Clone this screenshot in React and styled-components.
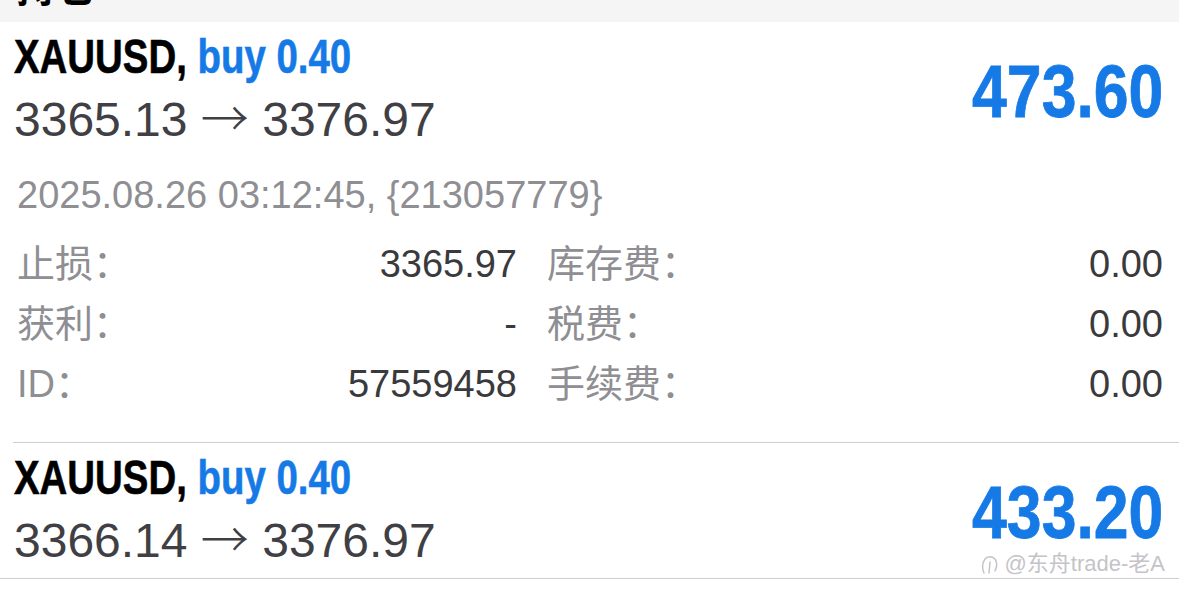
import React from "react";
import styled, { createGlobalStyle } from "styled-components";

const GlobalStyle = createGlobalStyle`
  html, body {
    margin: 0;
    padding: 0;
    background: #fff;
  }
  body {
    font-family: "Liberation Sans", "Noto Sans CJK SC", sans-serif;
    -webkit-font-smoothing: antialiased;
  }
`;

const BLUE = "#157ae6";

const Page = styled.div`
  position: relative;
  width: 1179px;
  background: #fff;
  overflow: hidden;
`;

const SectionHeader = styled.div`
  height: 22px;
  background: #f5f5f5;
  overflow: hidden;
  padding-left: 16px;
`;

const SectionTitle = styled.div`
  margin-top: -35px;
  font-size: 40px;
  line-height: 40px;
  font-weight: 700;
  color: #000;
  font-family: "Noto Sans CJK SC", sans-serif;
`;

const Item = styled.div`
  padding: 7px 16px ${p => p.$bottom}px 14px;
`;

const Top = styled.div`
  display: flex;
  justify-content: space-between;
  align-items: center;
`;

const TitleLine = styled.div`
  font-size: 48px;
  line-height: 56px;
  font-weight: 700;
  color: #000;
  white-space: nowrap;
`;

const Condensed = styled.span`
  display: inline-block;
  transform: scaleX(0.8);
  transform-origin: left center;
  -webkit-text-stroke: 0.6px currentColor;
`;

const Side = styled.span`
  color: ${BLUE};
`;

const PriceLine = styled.div`
  margin-top: 7px;
  font-size: 48px;
  line-height: 56px;
  color: #404044;
  white-space: nowrap;
`;

const Arrow = styled.span`
  font-family: "Noto Sans CJK SC", sans-serif;
  font-weight: 300;
  line-height: 0;
`;

const Profit = styled.div`
  margin-top: 6px;
  font-size: 74px;
  line-height: 74px;
  font-weight: 700;
  color: ${BLUE};
  transform: scaleX(0.845);
  transform-origin: right center;
  -webkit-text-stroke: 0.8px currentColor;
`;

const DateLine = styled.div`
  margin: 23px 0 0 3px;
  font-size: 38px;
  line-height: 48px;
  color: #8e8e93;
  white-space: nowrap;
`;

const Details = styled.div`
  margin: 15px 0 0 3px;
  display: grid;
  grid-template-columns: 500px 1fr;
  column-gap: 30px;
`;

const Detail = styled.div`
  display: flex;
  justify-content: space-between;
  font-size: 38px;
  line-height: 60px;
  white-space: nowrap;
`;

const Label = styled.span`
  color: #8e8e93;
`;

const Value = styled.span`
  color: #3a3a3c;
`;

const Divider = styled.div`
  height: 1px;
  margin-left: ${p => (p.$inset ? 13 : 0)}px;
  background: #cfcfd2;
`;

const Watermark = styled.div`
  position: absolute;
  top: 551px;
  right: 14px;
  display: flex;
  align-items: center;
  gap: 6px;
  font-size: 22px;
  line-height: 26px;
  color: #c4c4c8;
  text-shadow: 0 0 1px #fff, 0 0 1px #fff;
`;

const details = [
  ["止损：", "3365.97", "库存费：", "0.00"],
  ["获利：", "-", "税费：", "0.00"],
  ["ID：", "57559458", "手续费：", "0.00"]
];

const Position = ({ from, to, profit, open, bottom }) => (
  <Item $bottom={bottom}>
    <Top>
      <div>
        <TitleLine>
          <Condensed>
            XAUUSD, <Side>buy 0.40</Side>
          </Condensed>
        </TitleLine>
        <PriceLine>
          {from} <Arrow>→</Arrow> {to}
        </PriceLine>
      </div>
      <Profit>{profit}</Profit>
    </Top>
    {open && (
      <>
        <DateLine>2025.08.26 03:12:45, {"{213057779}"}</DateLine>
        <Details>
          {details.map(([l1, v1, l2, v2]) => (
            <React.Fragment key={l1}>
              <Detail>
                <Label>{l1}</Label>
                <Value>{v1}</Value>
              </Detail>
              <Detail>
                <Label>{l2}</Label>
                <Value>{v2}</Value>
              </Detail>
            </React.Fragment>
          ))}
        </Details>
      </>
    )}
  </Item>
);

export default function App() {
  return (
    <Page>
      <GlobalStyle />
      <SectionHeader>
        <SectionTitle>持仓</SectionTitle>
      </SectionHeader>
      <Position open from="3365.13" to="3376.97" profit="473.60" bottom={28} />
      <Divider $inset />
      <Position from="3366.14" to="3376.97" profit="433.20" bottom={9} />
      <Divider />
      <Watermark>
        <svg width="18" height="24" viewBox="0 0 18 24" fill="none">
          <path
            d="M3 21c-2-4-2-10 1-14 2-3 7-3 10 0 2 3 2 8 0 12"
            stroke="#c4c4c8"
            strokeWidth="1.5"
            strokeLinecap="round"
          />
          <path d="M9 10l-1 11" stroke="#c4c4c8" strokeWidth="1.5" strokeLinecap="round" />
        </svg>
        <span>@东舟trade-老A</span>
      </Watermark>
    </Page>
  );
}
